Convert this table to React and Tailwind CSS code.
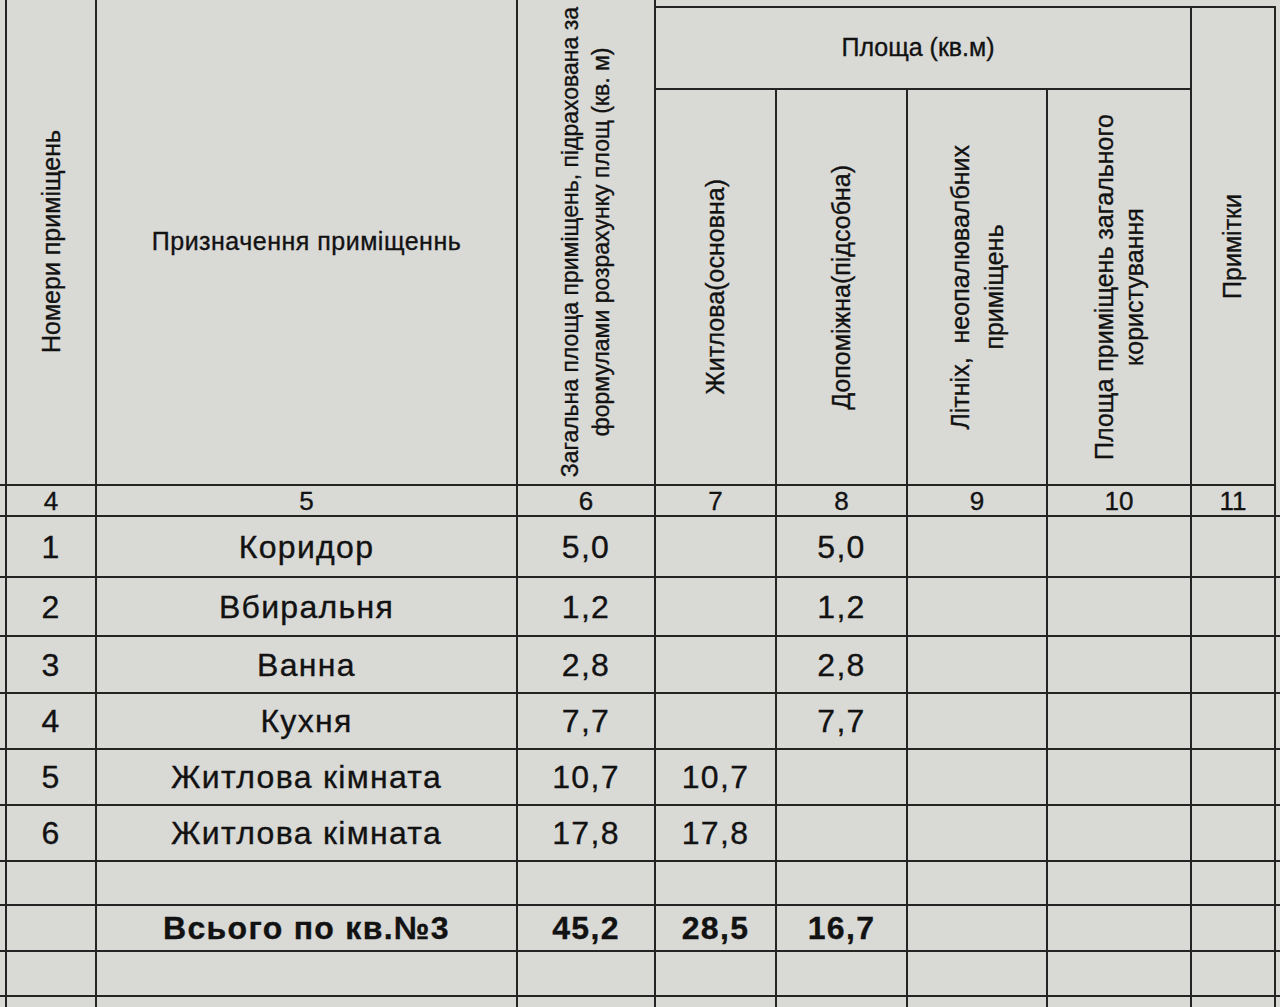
import React from "react";

const COLS = "grid grid-cols-[7px_90px_421px_138px_121px_131px_140px_144px_84px_1fr]";
const B = "border-[#242424]";

function VText({ children, className = "" }) {
  return (
    <div className="h-full w-full flex items-center justify-center overflow-visible">
      <span className={"[writing-mode:vertical-rl] rotate-180 text-center whitespace-nowrap " + className}>
        {children}
      </span>
    </div>
  );
}

const rows = [
  { h: "h-[61px]", n: "1", name: "Коридор", total: "5,0", liv: "", aux: "5,0" },
  { h: "h-[59px]", n: "2", name: "Вбиральня", total: "1,2", liv: "", aux: "1,2" },
  { h: "h-[57px]", n: "3", name: "Ванна", total: "2,8", liv: "", aux: "2,8" },
  { h: "h-[56px]", n: "4", name: "Кухня", total: "7,7", liv: "", aux: "7,7" },
  { h: "h-[56px]", n: "5", name: "Житлова кімната", total: "10,7", liv: "10,7", aux: "" },
  { h: "h-[56px]", n: "6", name: "Житлова кімната", total: "17,8", liv: "17,8", aux: "" },
  { h: "h-[44px]", n: "", name: "", total: "", liv: "", aux: "" },
  { h: "h-[46px]", n: "", name: "Всього по кв.№3", total: "45,2", liv: "28,5", aux: "16,7", bold: true },
  { h: "h-[45px]", n: "", name: "", total: "", liv: "", aux: "" },
  { h: "h-[20px]", n: "", name: "", total: "", liv: "", aux: "" },
];

function Cell({ children, className = "", last = false }) {
  return (
    <div className={(last ? "border-b-2 " : "border-r-2 border-b-2 ") + B + " min-h-0 overflow-visible flex items-center justify-center leading-none " + className}>
      {children}
    </div>
  );
}

export default function App() {
  return (
    <div
      className="w-[1280px] h-[1007px] overflow-hidden bg-[#d9d9d6] text-[#121212] [-webkit-text-stroke:0.35px_#121212]"
      style={{ fontFamily: '"Liberation Sans", Arial, "Noto Sans", sans-serif' }}
    >
      {/* Header */}
      <div className={COLS + " grid-rows-[6px_84px_396px] h-[486px]"}>
        <div className={"row-span-3 border-r-2 border-b-2 " + B}></div>
        <div className={"row-span-3 border-r-2 border-b-2 " + B}>
          <VText className="text-[25px] leading-[31px]">Номери приміщень</VText>
        </div>
        <div className={"row-span-3 border-r-2 border-b-2 flex items-center justify-center " + B}>
          <span className="text-[25px] tracking-[0.5px]">Призначення приміщеннь</span>
        </div>
        <div className={"row-span-3 border-r-2 border-b-2 " + B}>
          <VText className="text-[23px] leading-[31px]">
            Загальна площа приміщень, підрахована за
            <br />
            формулами розрахунку площ (кв. м)
          </VText>
        </div>
        <div className="col-span-6"></div>
        <div className={"col-start-5 col-span-4 row-start-2 border-t-2 border-r-2 border-b-2 flex items-center justify-center pr-[10px] " + B}>
          <span className="text-[25px]">Площа (кв.м)</span>
        </div>
        <div className={"col-start-9 row-start-2 row-span-2 border-t-2 border-r-2 border-b-2 " + B}>
          <VText className="text-[25px]">Примітки</VText>
        </div>
        <div className="col-start-10 row-start-1 row-span-3"></div>
        <div className={"col-start-5 row-start-3 border-r-2 border-b-2 " + B}>
          <VText className="text-[25px]">Житлова(основна)</VText>
        </div>
        <div className={"col-start-6 row-start-3 border-r-2 border-b-2 " + B}>
          <VText className="text-[25px]">Допоміжна(підсобна)</VText>
        </div>
        <div className={"col-start-7 row-start-3 border-r-2 border-b-2 " + B}>
          <VText className="text-[25px] leading-[34px]">
            Літніх,&nbsp;&nbsp;неопалювалбних
            <br />
            приміщень
          </VText>
        </div>
        <div className={"col-start-8 row-start-3 border-r-2 border-b-2 " + B}>
          <VText className="text-[25px] leading-[30px]">
            Площа приміщень загального
            <br />
            користування
          </VText>
        </div>
      </div>

      {/* Column numbers row */}
      <div className={COLS + " grid-rows-[31px] h-[31px] text-[26px]"}>
        <Cell></Cell>
        <Cell>4</Cell>
        <Cell>5</Cell>
        <Cell>6</Cell>
        <Cell>7</Cell>
        <Cell>8</Cell>
        <Cell>9</Cell>
        <Cell>10</Cell>
        <Cell>11</Cell>
        <Cell last></Cell>
      </div>

      {/* Data rows */}
      {rows.map((r, i) => (
        <div
          key={i}
          className={COLS + " grid-rows-[100%] " + r.h + " text-[32px] tracking-[1.3px] " + (r.bold ? "font-bold" : "")}
        >
          <Cell></Cell>
          <Cell>{r.n}</Cell>
          <Cell>{r.name}</Cell>
          <Cell>{r.total}</Cell>
          <Cell>{r.liv}</Cell>
          <Cell>{r.aux}</Cell>
          <Cell></Cell>
          <Cell></Cell>
          <Cell></Cell>
          <Cell last></Cell>
        </div>
      ))}
    </div>
  );
}
